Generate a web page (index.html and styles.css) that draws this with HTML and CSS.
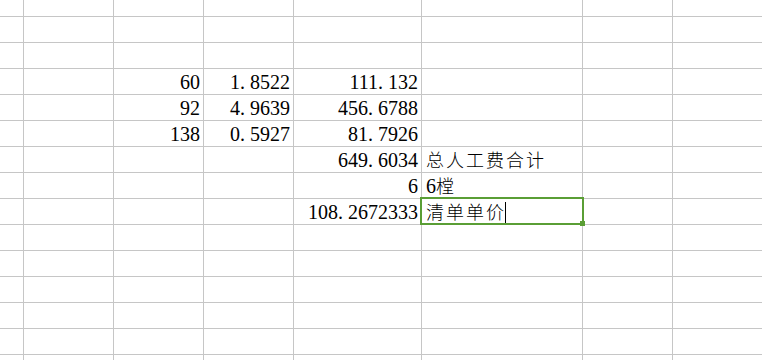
FILE: index.html
```html
<!DOCTYPE html>
<html lang="zh-CN">
<head>
<meta charset="utf-8">
<title>Sheet</title>
<link rel="stylesheet" href="styles.css">
</head>
<body>
<div class="sheet">
  <div class="c"></div><div class="c"></div><div class="c"></div><div class="c"></div><div class="c"></div><div class="c"></div><div class="c"></div><div class="c"></div>
  <div class="c"></div><div class="c"></div><div class="c"></div><div class="c"></div><div class="c"></div><div class="c"></div><div class="c"></div><div class="c"></div>
  <div class="c"></div><div class="c"></div><div class="c"></div><div class="c"></div><div class="c"></div><div class="c"></div><div class="c"></div><div class="c"></div>

  <div class="c"></div><div class="c"></div><div class="c n">60</div><div class="c n">1<span class="pt">.</span>8522</div><div class="c n">111<span class="pt">.</span>132</div><div class="c"></div><div class="c"></div><div class="c"></div>
  <div class="c"></div><div class="c"></div><div class="c n">92</div><div class="c n">4<span class="pt">.</span>9639</div><div class="c n">456<span class="pt">.</span>6788</div><div class="c"></div><div class="c"></div><div class="c"></div>
  <div class="c"></div><div class="c"></div><div class="c n">138</div><div class="c n">0<span class="pt">.</span>5927</div><div class="c n">81<span class="pt">.</span>7926</div><div class="c"></div><div class="c"></div><div class="c"></div>
  <div class="c"></div><div class="c"></div><div class="c"></div><div class="c"></div><div class="c n">649<span class="pt">.</span>6034</div><div class="c t"><span class="zh">总人工费合计</span></div><div class="c"></div><div class="c"></div>
  <div class="c"></div><div class="c"></div><div class="c"></div><div class="c"></div><div class="c n">6</div><div class="c t">6<span class="zh">樘</span></div><div class="c"></div><div class="c"></div>
  <div class="c"></div><div class="c"></div><div class="c"></div><div class="c"></div><div class="c n">108<span class="pt">.</span>2672333</div><div class="c t sel"><span class="zh">清单单价</span><span class="caret"></span><div class="sel-box"><div class="handle"></div></div></div><div class="c"></div><div class="c"></div>

  <div class="c"></div><div class="c"></div><div class="c"></div><div class="c"></div><div class="c"></div><div class="c"></div><div class="c"></div><div class="c"></div>
  <div class="c"></div><div class="c"></div><div class="c"></div><div class="c"></div><div class="c"></div><div class="c"></div><div class="c"></div><div class="c"></div>
  <div class="c"></div><div class="c"></div><div class="c"></div><div class="c"></div><div class="c"></div><div class="c"></div><div class="c"></div><div class="c"></div>
  <div class="c"></div><div class="c"></div><div class="c"></div><div class="c"></div><div class="c"></div><div class="c"></div><div class="c"></div><div class="c"></div>
  <div class="c"></div><div class="c"></div><div class="c"></div><div class="c"></div><div class="c"></div><div class="c"></div><div class="c"></div><div class="c"></div>
  <div class="c"></div><div class="c"></div><div class="c"></div><div class="c"></div><div class="c"></div><div class="c"></div><div class="c"></div><div class="c"></div>
</div>
</body>
</html>
```
FILE: styles.css
```css
html, body {
  margin: 0;
  padding: 0;
  background: #ffffff;
  overflow: hidden;
}

.sheet {
  display: grid;
  grid-template-columns: 24px 90px 90px 90px 128px 161px 90px 91px;
  grid-template-rows: 17px;
  grid-auto-rows: 26px;
  width: 774px;
  height: 360px;
  overflow: hidden;
  font-family: "Liberation Serif", "DejaVu Serif", serif;
  font-size: 20px;
  color: #000000;
}

.c {
  box-sizing: border-box;
  border-right: 1px solid #c6c6c6;
  border-bottom: 1px solid #c6c6c6;
  padding-top: 1px;
  line-height: 24px;
  white-space: nowrap;
  min-width: 0;
  font-family: "Liberation Serif", "DejaVu Serif", serif;
}

.n {
  text-align: right;
  padding-right: 3px;
}

.t {
  text-align: left;
  padding-left: 4px;
}

.pt {
  display: inline-block;
  width: 0.5em;
  text-align: left;
}

.zh {
  font-family: "Noto Sans CJK SC", sans-serif;
  font-size: 18px;
  letter-spacing: 2px;
  line-height: 20px;
  font-weight: 300;
}

.sel {
  position: relative;
}

.caret {
  display: inline-block;
  width: 1px;
  height: 23px;
  background: #000000;
  vertical-align: -6px;
  margin-left: -1px;
}

.sel-box {
  position: absolute;
  left: -2px;
  top: -2px;
  width: 164px;
  height: 28px;
  box-sizing: border-box;
  border: 2px solid #5a9e35;
}

.handle {
  position: absolute;
  left: 158px;
  top: 22px;
  width: 5px;
  height: 5px;
  background: #5a9e35;
}
```
